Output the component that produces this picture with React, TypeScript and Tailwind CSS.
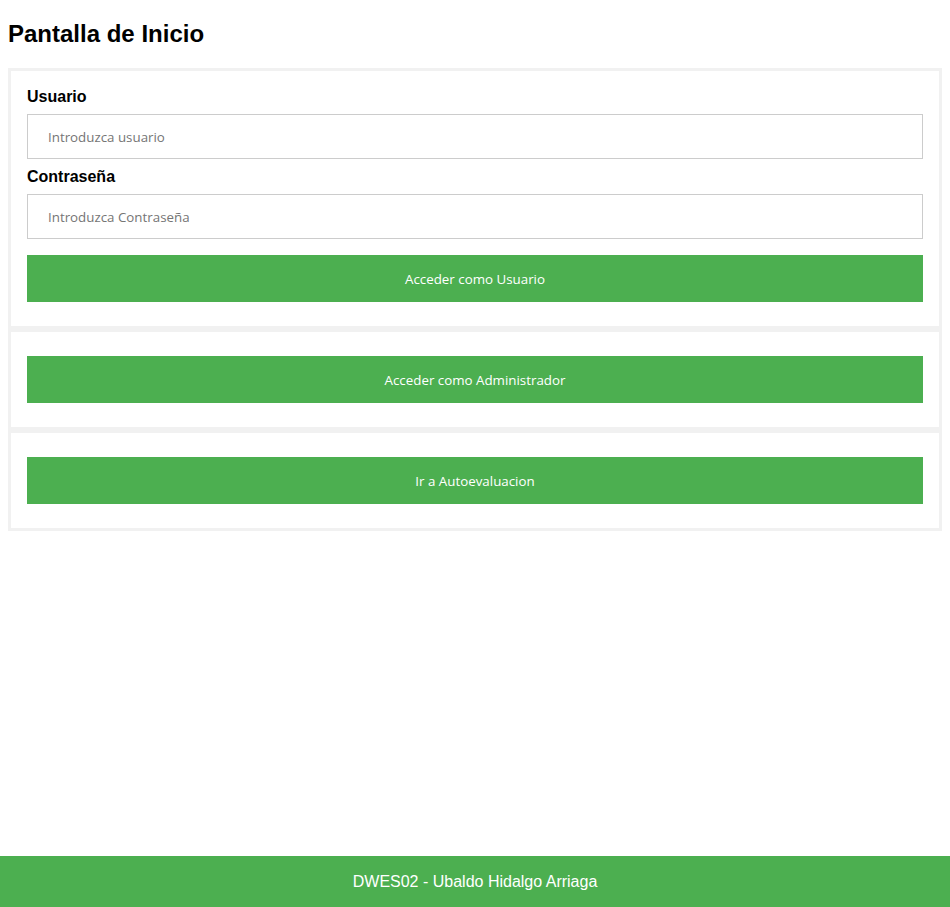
import React from "react";

export default function App() {
  const arial = { fontFamily: '"Liberation Sans", Arial, sans-serif' };
  return (
    <div className="min-h-screen flex flex-col bg-white" style={arial}>
      <div className="flex-1 px-2">
        <h2 className="text-[24px] font-bold leading-[27.6px] mt-[20px] mb-[20px] text-black font-['Liberation_Sans',Arial,sans-serif]">
          Pantalla de Inicio
        </h2>
        <form className="flex flex-col" onSubmit={(e) => e.preventDefault()}>
          <div className="border-[3px] border-[#f1f1f1] p-4 flex flex-col">
            <label className="block mt-px text-[16px] font-bold leading-[18px] text-black font-['Liberation_Sans',Arial,sans-serif]">
              Usuario
            </label>
            <input
              type="text"
              placeholder="Introduzca usuario"
              className="mt-2 mb-2 h-[45px] w-full border border-[#ccc] px-5 pt-[2px] text-[13.33px] font-['Open_Sans',sans-serif] placeholder:text-[#757575] outline-none"
            />
            <label className="block mt-px text-[16px] font-bold leading-[18px] text-black font-['Liberation_Sans',Arial,sans-serif]">
              Contraseña
            </label>
            <input
              type="password"
              placeholder="Introduzca Contraseña"
              className="mt-2 mb-2 h-[45px] w-full border border-[#ccc] px-5 pt-[2px] text-[13.33px] font-['Open_Sans',sans-serif] placeholder:text-[#757575] outline-none"
            />
            <button
              type="submit"
              className="my-2 h-[47px] w-full pt-1 bg-[#4CAF50] text-white text-[13.33px] font-['Open_Sans',sans-serif]"
            >
              Acceder como Usuario
            </button>
          </div>
          <div className="border-[3px] border-[#f1f1f1] p-4 flex flex-col">
            <button
              type="button"
              className="my-2 h-[47px] w-full pt-1 bg-[#4CAF50] text-white text-[13.33px] font-['Open_Sans',sans-serif]"
            >
              Acceder como Administrador
            </button>
          </div>
          <div className="border-[3px] border-[#f1f1f1] p-4 flex flex-col">
            <button
              type="button"
              className="my-2 h-[47px] w-full pt-1 bg-[#4CAF50] text-white text-[13.33px] font-['Open_Sans',sans-serif]"
            >
              Ir a Autoevaluacion
            </button>
          </div>
        </form>
      </div>
      <footer className="h-[51px] bg-[#4CAF50] flex items-center justify-center text-white text-[16px] font-['Liberation_Sans',Arial,sans-serif]">
        DWES02 - Ubaldo Hidalgo Arriaga
      </footer>
    </div>
  );
}
